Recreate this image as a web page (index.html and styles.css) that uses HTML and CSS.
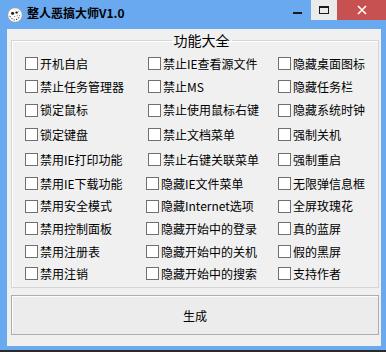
FILE: index.html
```html
<!DOCTYPE html>
<html lang="zh-CN">
<head>
<meta charset="utf-8">
<title>整人恶搞大师V1.0</title>
<link rel="stylesheet" href="styles.css">
</head>
<body>
<div class="window">
  <div class="titlebar">
    <svg class="app-icon" width="16" height="16" viewBox="0 0 16 16">
      <circle cx="8" cy="8" r="7.3" fill="#fafafa" stroke="#9a9a9a" stroke-width="0.8"/>
      <ellipse cx="5.6" cy="6.4" rx="1.6" ry="1.3" fill="#1a1a1a"/>
      <ellipse cx="9.6" cy="5.6" rx="1.3" ry="1.1" fill="#1a1a1a"/>
      <circle cx="3.2" cy="9.6" r="0.6" fill="#333"/>
      <circle cx="5" cy="11.6" r="0.6" fill="#333"/>
      <circle cx="7.2" cy="12.8" r="0.6" fill="#333"/>
      <circle cx="9.6" cy="12.4" r="0.6" fill="#333"/>
      <circle cx="11.8" cy="10.8" r="0.6" fill="#333"/>
      <circle cx="12.6" cy="8.2" r="0.5" fill="#555"/>
      <circle cx="7.6" cy="9.4" r="0.5" fill="#555"/>
      <circle cx="10.4" cy="8.8" r="0.5" fill="#555"/>
      <circle cx="11.8" cy="4.2" r="0.5" fill="#777"/>
    </svg>
    <span class="title">整人恶搞大师V1.0</span>
    <div class="caption-buttons">
      <span class="cbtn cbtn-min"><span class="min-bar"></span></span>
      <span class="cbtn cbtn-max"><span class="max-box"></span></span>
      <span class="cbtn cbtn-close">
        <svg width="10" height="10" viewBox="0 0 10 10"><path d="M1 1 L9 9 M9 1 L1 9" stroke="#fff" stroke-width="1.6"/></svg>
      </span>
    </div>
  </div>
  <div class="client">
    <fieldset class="group">
      <legend class="group-title">功能大全</legend>
      <div class="grid">
        <label class="item"><span class="box"></span>开机自启</label>
        <label class="item"><span class="box"></span>禁止IE查看源文件</label>
        <label class="item"><span class="box"></span>隐藏桌面图标</label>

        <label class="item"><span class="box"></span>禁止任务管理器</label>
        <label class="item"><span class="box"></span>禁止MS</label>
        <label class="item"><span class="box"></span>隐藏任务栏</label>

        <label class="item"><span class="box"></span>锁定鼠标</label>
        <label class="item"><span class="box"></span>禁止使用鼠标右键</label>
        <label class="item"><span class="box"></span>隐藏系统时钟</label>

        <label class="item"><span class="box"></span>锁定键盘</label>
        <label class="item"><span class="box"></span>禁止文档菜单</label>
        <label class="item"><span class="box"></span>强制关机</label>

        <label class="item"><span class="box"></span>禁用IE打印功能</label>
        <label class="item"><span class="box"></span>禁止右键关联菜单</label>
        <label class="item"><span class="box"></span>强制重启</label>

        <label class="item"><span class="box"></span>禁用IE下载功能</label>
        <label class="item item-shift"><span class="box"></span>隐藏IE文件菜单</label>
        <label class="item"><span class="box"></span>无限弹信息框</label>

        <label class="item"><span class="box"></span>禁用安全模式</label>
        <label class="item item-shift"><span class="box"></span>隐藏Internet选项</label>
        <label class="item"><span class="box"></span>全屏玫瑰花</label>

        <label class="item"><span class="box"></span>禁用控制面板</label>
        <label class="item item-shift"><span class="box"></span>隐藏开始中的登录</label>
        <label class="item"><span class="box"></span>真的蓝屏</label>

        <label class="item"><span class="box"></span>禁用注册表</label>
        <label class="item item-shift"><span class="box"></span>隐藏开始中的关机</label>
        <label class="item"><span class="box"></span>假的黑屏</label>

        <label class="item"><span class="box"></span>禁用注销</label>
        <label class="item item-shift"><span class="box"></span>隐藏开始中的搜索</label>
        <label class="item"><span class="box"></span>支持作者</label>
      </div>
    </fieldset>
    <button class="generate" type="button">生成</button>
  </div>
</div>
</body>
</html>
```
FILE: styles.css
```css
html, body {
  margin: 0;
  padding: 0;
  background: #69a9ef;
}

body {
  font-family: "Noto Sans CJK SC", "Noto Sans", sans-serif;
  font-size: 12px;
  color: #000;
}

.window {
  width: 386px;
  height: 350px;
  background: #69a9ef;
  border-bottom: 2px solid #2a2a2a;
  display: flex;
  flex-direction: column;
  overflow: hidden;
}

.titlebar {
  height: 29px;
  display: flex;
  align-items: flex-start;
  flex-shrink: 0;
}

.app-icon {
  margin: 7px 0 0 7px;
  flex-shrink: 0;
}

.title {
  margin: 5px 0 0 4px;
  font-weight: bold;
  font-size: 12px;
  line-height: 16px;
  color: #000;
}

.caption-buttons {
  margin-left: auto;
  display: flex;
  height: 20px;
}

.cbtn {
  height: 20px;
  display: flex;
  align-items: center;
  justify-content: center;
}

.cbtn-min {
  width: 27px;
}

.min-bar {
  width: 9px;
  height: 2px;
  background: #1a1a1a;
  margin-top: 6px;
}

.cbtn-max {
  width: 26px;
  background: #ebebeb;
}

.max-box {
  width: 8px;
  height: 5px;
  border: 1px solid #1a1a1a;
  border-top-width: 2px;
}

.cbtn-close {
  width: 49px;
  background: #c75050;
}

.client {
  margin: 0 5px 0 7px;
  height: 317px;
  background: #f0f0f0;
  display: flex;
  flex-direction: column;
  box-sizing: border-box;
  padding: 3px 2px 0 4px;
}

.group {
  margin: 0;
  padding: 4px 0 3px 13px;
  min-width: 0;
  border: 1px solid #d5d5d5;
  box-shadow: inset 1px 1px 0 #fff;
}

.group-title {
  margin: 0 auto;
  padding: 0 2px;
  font-size: 14px;
  line-height: 16px;
}

.grid {
  display: grid;
  grid-template-columns: 123px 130px 1fr;
  grid-template-rows: 23px 23px 24px 25px 25px 23px 22px 23px 23px 21px;
  align-items: center;
}

.item {
  display: flex;
  align-items: center;
  gap: 2px;
  line-height: 14px;
  white-space: nowrap;
}

.item-shift {
  margin-left: -2px;
}

.box {
  width: 11px;
  height: 11px;
  border: 1px solid #707070;
  background: #fff;
  flex-shrink: 0;
}

.generate {
  margin: 7px 0 0 0;
  height: 40px;
  border: 1px solid #adadad;
  background: #ececec;
  box-shadow: inset 1px 1px 0 #fcfcfc;
  font-family: "Noto Sans CJK SC", "Noto Sans", sans-serif;
  font-size: 12px;
  color: #000;
  padding: 0;
}
```
